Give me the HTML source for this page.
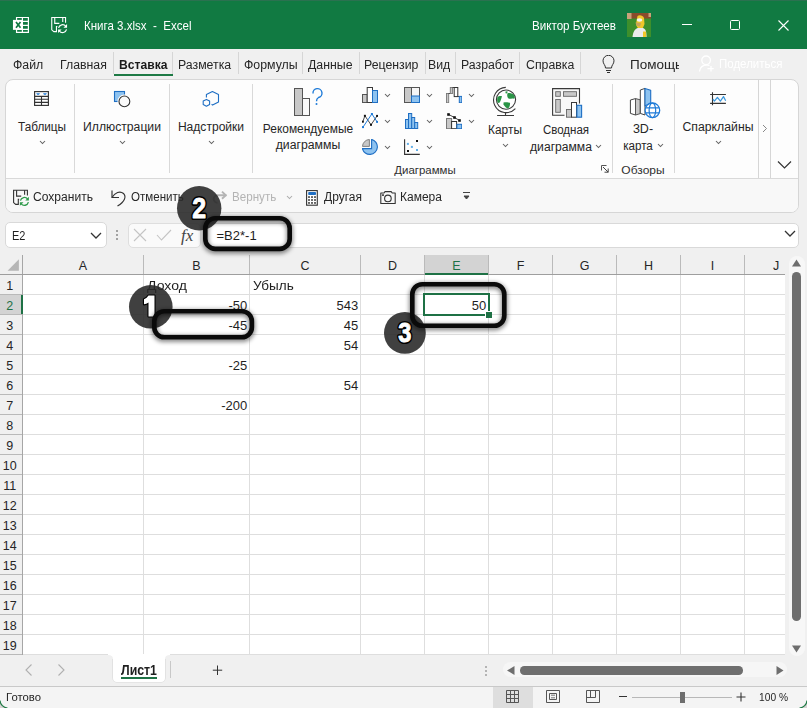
<!DOCTYPE html>
<html><head><meta charset="utf-8"><style>
html,body{margin:0;padding:0;}
body{width:807px;height:708px;overflow:hidden;position:relative;background:#f0f0f0;font-family:"Liberation Sans", sans-serif;}
.t{position:absolute;line-height:1;white-space:pre;}
.r{position:absolute;}
</style></head><body>
<div class="r" style="left:0px;top:0px;width:807px;height:49px;background:#117a42;"></div><div class="r" style="left:0px;top:0px;width:807px;height:1px;background:#2b7150;"></div><svg class="r" style="left:10px;top:14px;" width="22" height="22" viewBox="0 0 22 22">
<path d="M6.55 3 V18.95 M12.4 3 V18.95 M18.4 3 V18.95 M6 3.5 H19 M6 7.37 H19 M6 11.34 H19 M6 15.3 H19 M6 18.4 H19" stroke="#ffffff" stroke-width="1.2"/>
<rect x="2.95" y="5.9" width="9.8" height="9.95" fill="#ffffff"/>
<path d="M6 7.9 L10.5 13.7 M10.5 7.9 L6 13.7" stroke="#117a42" stroke-width="1.7"/>
</svg><svg class="r" style="left:48px;top:14px;" width="22" height="22" viewBox="0 0 22 22"><g transform="translate(-3.85 -2.73)">
<path d="M21.4 11.4 V6.3 H7.6 V18.6 L9.7 20.4 H12.3 V15.3 H13.2" fill="none" stroke="#ffffff" stroke-width="1.1"/>
<path d="M10.6 6.3 V12.1 H15.2 M18.6 6.3 V10.8" fill="none" stroke="#ffffff" stroke-width="1.1"/>
<path d="M14.4 16.6 A4.1 4.1 0 0 1 21.6 15" fill="none" stroke="#ffffff" stroke-width="1.2"/>
<path d="M19.3 16.4 H22.9 V12.8 Z" fill="#ffffff"/>
<path d="M22.4 18.2 A4.1 4.1 0 0 1 15.2 19.8" fill="none" stroke="#ffffff" stroke-width="1.2"/>
<path d="M17.5 18.2 H13.9 V21.8 Z" fill="#ffffff"/>
</g></svg><div class="t" style="top:19.13px;font-size:13.2px;color:#ffffff;left:83.5px;transform:scaleX(0.875);transform-origin:left;">Книга 3.xlsx  -  Excel</div><div class="t" style="top:19.82px;font-size:12.5px;color:#ffffff;left:532px;transform:scaleX(0.93);transform-origin:left;">Виктор Бухтеев</div><svg class="r" style="left:627px;top:13px;" width="24" height="24" viewBox="0 0 24 24">
<rect width="24" height="24" fill="#3d8f2c"/>
<rect x="0" y="0" width="24" height="5.5" fill="#8a4b2b"/>
<rect x="0" y="0" width="4.5" height="6" fill="#c9a27a"/>
<rect x="21.5" y="0" width="2.5" height="4" fill="#c9a27a"/>
<path d="M10.5 3 C12 1.5 16 2 17 5 L17.5 11 C17 13 16 14 15.5 16 L11.5 16 C10.5 14 9 13 9 11 L9.5 8 Z" fill="#f1c72a"/>
<ellipse cx="12.5" cy="7" rx="2.8" ry="1.8" fill="#f4f4f4"/>
<path d="M8.5 9.5 C9 12.5 10.5 13.5 13 13.5 L14 10 Z" fill="#c9a35a"/>
<path d="M5.5 24 C6 19 8 15.5 11 15 L16 15 C19 16 19.5 19 19.5 24 Z" fill="#ebebeb"/>
<rect x="16" y="18.5" width="3" height="5.5" fill="#f1c72a"/>
</svg><div class="r" style="left:682px;top:24px;width:10px;height:1px;background:#ffffff;"></div><div class="r" style="left:730px;top:20.3px;width:10px;height:9.5px;border:1px solid #ffffff;box-sizing:border-box;border-radius:1.5px;"></div><svg class="r" style="left:777.5px;top:19.8px;" width="11" height="11" viewBox="0 0 11 11"><path d="M0.5 0.5 L10.5 10.5 M10.5 0.5 L0.5 10.5" stroke="#ffffff" stroke-width="1.1"/></svg><div class="t" style="top:58.92px;font-size:12.5px;color:#262626;left:12.7px;transform:scaleX(0.985);transform-origin:left;">Файл</div><div class="t" style="top:58.92px;font-size:12.5px;color:#262626;left:60.4px;transform:scaleX(0.985);transform-origin:left;">Главная</div><div class="t" style="top:58.92px;font-size:12.5px;color:#1a1a1a;font-weight:700;left:119.0px;transform:scaleX(0.97);transform-origin:left;">Вставка</div><div class="t" style="top:58.92px;font-size:12.5px;color:#262626;left:178px;transform:scaleX(0.985);transform-origin:left;">Разметка</div><div class="t" style="top:58.92px;font-size:12.5px;color:#262626;left:243.5px;transform:scaleX(0.985);transform-origin:left;">Формулы</div><div class="t" style="top:58.92px;font-size:12.5px;color:#262626;left:308px;transform:scaleX(0.985);transform-origin:left;">Данные</div><div class="t" style="top:58.92px;font-size:12.5px;color:#262626;left:364.3px;transform:scaleX(0.985);transform-origin:left;">Рецензир</div><div class="t" style="top:58.92px;font-size:12.5px;color:#262626;left:428.2px;transform:scaleX(0.985);transform-origin:left;">Вид</div><div class="t" style="top:58.92px;font-size:12.5px;color:#262626;left:460.8px;transform:scaleX(0.985);transform-origin:left;">Разработ</div><div class="t" style="top:58.92px;font-size:12.5px;color:#262626;left:525.5px;transform:scaleX(0.985);transform-origin:left;">Справка</div><div class="r" style="left:113px;top:52px;width:1px;height:22px;background:#d6d6d6;"></div><div class="r" style="left:172px;top:52px;width:1px;height:22px;background:#d6d6d6;"></div><div class="r" style="left:238px;top:52px;width:1px;height:22px;background:#d6d6d6;"></div><div class="r" style="left:302px;top:52px;width:1px;height:22px;background:#d6d6d6;"></div><div class="r" style="left:359px;top:52px;width:1px;height:22px;background:#d6d6d6;"></div><div class="r" style="left:425px;top:52px;width:1px;height:22px;background:#d6d6d6;"></div><div class="r" style="left:455px;top:52px;width:1px;height:22px;background:#d6d6d6;"></div><div class="r" style="left:519px;top:52px;width:1px;height:22px;background:#d6d6d6;"></div><div class="r" style="left:580px;top:52px;width:1px;height:22px;background:#d6d6d6;"></div><div class="r" style="left:114px;top:74px;width:59px;height:2px;background:#1e7a45;"></div><svg class="r" style="left:602px;top:55px;" width="13" height="19" viewBox="0 0 13 19">
<path d="M3.5 13 C3.5 10 1 9 1 5.8 A5.5 5.5 0 0 1 12 5.8 C12 9 9.5 10 9.5 13 Z" fill="none" stroke="#303030" stroke-width="1"/>
<path d="M4 15.5 H9 M5 17.5 H8" stroke="#303030" stroke-width="1"/>
</svg><div class="r" style="left:630px;top:50px;width:48.5px;height:28px;overflow:hidden;"><div class="t" style="top:8.92px;font-size:12.5px;color:#262626;left:0px;transform:scaleX(1.08);transform-origin:left;">Помощь</div></div><svg class="r" style="left:695px;top:52px;" width="22" height="22" viewBox="0 0 22 22">
<circle cx="11.1" cy="8.3" r="4.3" fill="none" stroke="#fff" stroke-width="1.3"/>
<path d="M4.5 19.5 C5 15.5 8 13 12 13 C13 13 14 13.2 14.5 13.5" fill="none" stroke="#fff" stroke-width="1.3"/>
<path d="M16 14 V19.5 M12.5 16.7 H18.7" stroke="#fff" stroke-width="1.3"/>
</svg><div class="t" style="top:58.02px;font-size:12.5px;color:#ffffff;left:718.5px;transform:scaleX(0.92);transform-origin:left;">Поделиться</div><div class="r" style="left:4.9px;top:79px;width:794px;height:134px;background:#fdfdfd;border:1px solid #d6d6d6;border-radius:8px;box-sizing:border-box;"></div><div class="r" style="left:5.9px;top:178px;width:792px;height:1px;background:#d9d9d9;"></div><div class="r" style="left:5.9px;top:179px;width:792px;height:33px;background:#f8f8f8;border-radius:0 0 7px 7px;"></div><div class="r" style="left:74px;top:84px;width:1px;height:89px;background:#d9d9d9;"></div><div class="r" style="left:169px;top:84px;width:1px;height:89px;background:#d9d9d9;"></div><div class="r" style="left:252px;top:84px;width:1px;height:89px;background:#d9d9d9;"></div><div class="r" style="left:612px;top:84px;width:1px;height:89px;background:#d9d9d9;"></div><div class="r" style="left:674px;top:84px;width:1px;height:89px;background:#d9d9d9;"></div><svg class="r" style="left:28px;top:86px;" width="28" height="28" viewBox="0 0 28 28">
<rect x="6.6" y="5.6" width="13.8" height="13.8" fill="#fff" stroke="#333" stroke-width="1.15"/>
<path d="M6.6 10.4 H20.4 M6.6 13.3 H20.4 M6.6 16.4 H20.4 M13.5 10.4 V19.4" stroke="#333" stroke-width="1.1"/>
<path d="M8.2 7.2 H12 L11 8.8 H9.2 Z M15 7.2 H18.9 L17.9 8.8 H16 Z" fill="#1f7bd8"/>
</svg><div class="t" style="top:120.62px;font-size:12.5px;color:#262626;left:42px;transform:translateX(-50%) scaleX(0.94);">Таблицы</div><svg class="r" style="left:38.5px;top:140px;" width="7" height="5" viewBox="0 0 7 5"><path d="M1 1 L3.5 3.5 L6 1" fill="none" stroke="#606060" stroke-width="1.05"/></svg><svg class="r" style="left:108px;top:86px;" width="30" height="30" viewBox="0 0 30 30">
<rect x="6.5" y="5.5" width="10" height="10" fill="#8ec3f0" stroke="#1f6fc4" stroke-width="1.1"/>
<circle cx="16.4" cy="15.4" r="5.4" fill="#fafafa" stroke="#fdfdfd" stroke-width="3"/>
<circle cx="16.4" cy="15.4" r="5.4" fill="#fafafa" stroke="#333" stroke-width="1.1"/>
</svg><div class="t" style="top:120.62px;font-size:12.5px;color:#262626;left:121.8px;transform:translateX(-50%) scaleX(0.975);">Иллюстрации</div><svg class="r" style="left:118.5px;top:140px;" width="7" height="5" viewBox="0 0 7 5"><path d="M1 1 L3.5 3.5 L6 1" fill="none" stroke="#606060" stroke-width="1.05"/></svg><svg class="r" style="left:196px;top:86px;" width="30" height="30" viewBox="0 0 30 30">
<path d="M10.4 11.4 V8.6 L16.4 5.5 L22.5 8.6 V16 L16.6 19.1 L15.6 18.3" fill="none" stroke="#1f6fc4" stroke-width="1.1" stroke-linejoin="round"/>
<path d="M10.4 13.4 L13.6 15.1 V18.6 L10.4 20.3 L7.2 18.6 V15.1 Z" fill="none" stroke="#1f6fc4" stroke-width="1.1" stroke-linejoin="round"/>
</svg><div class="t" style="top:120.62px;font-size:12.5px;color:#262626;left:211px;transform:translateX(-50%) scaleX(0.965);">Надстройки</div><svg class="r" style="left:207.5px;top:140px;" width="7" height="5" viewBox="0 0 7 5"><path d="M1 1 L3.5 3.5 L6 1" fill="none" stroke="#606060" stroke-width="1.05"/></svg><svg class="r" style="left:293px;top:87px;" width="30" height="30" viewBox="0 0 30 30">
<rect x="1.5" y="1.5" width="8" height="27" fill="#c8c8c8" stroke="#555"/>
<rect x="9.5" y="11.5" width="7" height="17" fill="#fafafa" stroke="#555"/>
<path d="M20 6.5 A4.5 4.5 0 1 1 25.5 10.5 C24 11.3 23.5 12 23.5 14.2" fill="none" stroke="#1f7bd8" stroke-width="1.4"/>
<circle cx="23.5" cy="17" r="1" fill="#1f7bd8"/>
</svg><div class="t" style="top:123.12px;font-size:12.5px;color:#262626;left:308.3px;transform:translateX(-50%) scaleX(0.955);">Рекомендуемые</div><div class="t" style="top:139.12px;font-size:12.5px;color:#262626;left:308.3px;transform:translateX(-50%) scaleX(0.98);">диаграммы</div><svg class="r" style="left:362px;top:87px;" width="16" height="16" viewBox="0 0 16 16"><rect x="0.5" y="7.5" width="4.7" height="8" fill="#c8c8c8" stroke="#555"/><rect x="5.2" y="0.5" width="5.3" height="15" fill="#fff" stroke="#3a3a3a"/><rect x="10.5" y="3.5" width="5" height="12" fill="#8ec3f0" stroke="#1f6fc4"/></svg><svg class="r" style="left:383.5px;top:93.3px;" width="7" height="5" viewBox="0 0 7 5"><path d="M1 1 L3.5 3.5 L6 1" fill="none" stroke="#606060" stroke-width="1.05"/></svg><svg class="r" style="left:404px;top:87px;" width="16" height="16" viewBox="0 0 16 16"><rect x="0.5" y="0.5" width="15" height="15" fill="#f6f6f6" stroke="#555"/><rect x="1" y="1" width="6.5" height="14" fill="#c8c8c8"/><path d="M7.5 0.5 V15.5" stroke="#555"/><rect x="7.5" y="9" width="8" height="6.5" fill="#8ec3f0" stroke="#1f6fc4"/></svg><svg class="r" style="left:425.5px;top:93.3px;" width="7" height="5" viewBox="0 0 7 5"><path d="M1 1 L3.5 3.5 L6 1" fill="none" stroke="#606060" stroke-width="1.05"/></svg><svg class="r" style="left:446px;top:87px;" width="16" height="16" viewBox="0 0 16 16"><rect x="0.5" y="6.5" width="2.2" height="9.3" fill="#c8c8c8" stroke="#777" stroke-width="0.9"/><path d="M2.7 6.5 H4.3" stroke="#333" stroke-width="0.9"/><rect x="4.3" y="0.5" width="2.3" height="6" fill="#c8c8c8" stroke="#777" stroke-width="0.9"/><path d="M6.6 0.5 H8.2" stroke="#333" stroke-width="0.9"/><rect x="8.2" y="0.5" width="3.6" height="9.1" fill="#fff" stroke="#333" stroke-width="1"/><path d="M11.8 9.5 H13.3" stroke="#333" stroke-width="0.9"/><rect x="13.3" y="9.4" width="2.5" height="6.3" fill="#8ec3f0" stroke="#1f6fc4" stroke-width="1"/></svg><svg class="r" style="left:468.0px;top:93.3px;" width="7" height="5" viewBox="0 0 7 5"><path d="M1 1 L3.5 3.5 L6 1" fill="none" stroke="#606060" stroke-width="1.05"/></svg><svg class="r" style="left:362px;top:113px;" width="16" height="16" viewBox="0 0 16 16"><path d="M0.8 8.7 L2.9 2.8 L9 11.8 L15.1 2.9" fill="none" stroke="#333" stroke-width="0.9"/><path d="M1 14.1 L9.9 0.9 L15.1 8.9" fill="none" stroke="#1f7bd8" stroke-width="1"/><g fill="#111"><rect x="-0.2" y="7.7" width="2" height="2"/><rect x="1.9" y="1.8" width="2" height="2"/><rect x="8" y="10.8" width="2" height="2"/><rect x="14.1" y="1.9" width="2" height="2"/></g><g fill="#1f7bd8"><rect x="0" y="13.1" width="2" height="2"/><rect x="8.9" y="0" width="2" height="2"/><rect x="14.1" y="7.9" width="2" height="2"/></g></svg><svg class="r" style="left:383.5px;top:119.3px;" width="7" height="5" viewBox="0 0 7 5"><path d="M1 1 L3.5 3.5 L6 1" fill="none" stroke="#606060" stroke-width="1.05"/></svg><svg class="r" style="left:404px;top:113px;" width="16" height="16" viewBox="0 0 16 16"><rect x="1.5" y="6.5" width="3" height="9" fill="#8ec3f0" stroke="#1f6fc4"/><rect x="4.5" y="0.5" width="3.2" height="15" fill="#8ec3f0" stroke="#1f6fc4"/><rect x="7.7" y="4.5" width="3" height="11" fill="#8ec3f0" stroke="#1f6fc4"/><rect x="10.7" y="9.5" width="3" height="6" fill="#8ec3f0" stroke="#1f6fc4"/></svg><svg class="r" style="left:425.5px;top:119.3px;" width="7" height="5" viewBox="0 0 7 5"><path d="M1 1 L3.5 3.5 L6 1" fill="none" stroke="#606060" stroke-width="1.05"/></svg><svg class="r" style="left:446px;top:113px;" width="16" height="16" viewBox="0 0 16 16"><path d="M2.5 1.4 L8.5 4.5 L13.5 7.5" stroke="#333" stroke-width="0.9" fill="none"/><rect x="0.5" y="5.5" width="5.1" height="10.2" fill="#c8c8c8" stroke="#777"/><rect x="5.6" y="8.5" width="5" height="7.2" fill="#fff" stroke="#333"/><rect x="10.9" y="11.3" width="4.8" height="4.4" fill="#8ec3f0" stroke="#1f6fc4"/><g fill="#111"><rect x="1.2" y="0.2" width="2.6" height="2.6"/><rect x="7.2" y="3.2" width="2.6" height="2.6"/><rect x="12.2" y="6.2" width="2.6" height="2.6"/></g></svg><svg class="r" style="left:468.0px;top:119.3px;" width="7" height="5" viewBox="0 0 7 5"><path d="M1 1 L3.5 3.5 L6 1" fill="none" stroke="#606060" stroke-width="1.05"/></svg><svg class="r" style="left:362px;top:139px;" width="16" height="16" viewBox="0 0 16 16"><path d="M9.6 0.4 A7.6 7.6 0 1 1 0.4 9.6 H9.6 Z" fill="#8ec3f0" stroke="#1f6fc4" stroke-width="1.1"/><path d="M7.4 7.4 H0.5 A7.2 7.2 0 0 1 7.4 0.5 Z" fill="#c8c8c8" stroke="#777" stroke-width="0.9"/></svg><svg class="r" style="left:383.5px;top:145.3px;" width="7" height="5" viewBox="0 0 7 5"><path d="M1 1 L3.5 3.5 L6 1" fill="none" stroke="#606060" stroke-width="1.05"/></svg><svg class="r" style="left:404px;top:139px;" width="16" height="16" viewBox="0 0 16 16"><path d="M0.6 0.2 V15.4 H15.8" fill="none" stroke="#333" stroke-width="1.1"/><rect x="12" y="1" width="2" height="2" fill="#111"/><rect x="3" y="11" width="2" height="2" fill="#111"/><rect x="2.9" y="3.9" width="2" height="2" fill="#62aee8"/><rect x="6.9" y="6.9" width="2" height="2" fill="#62aee8"/><rect x="12" y="10" width="2" height="2" fill="#62aee8"/></svg><svg class="r" style="left:425.5px;top:145.3px;" width="7" height="5" viewBox="0 0 7 5"><path d="M1 1 L3.5 3.5 L6 1" fill="none" stroke="#606060" stroke-width="1.05"/></svg><div class="t" style="top:164.69px;font-size:11px;color:#303030;left:424.5px;transform:translateX(-50%) scaleX(1.04);">Диаграммы</div><svg class="r" style="left:488px;top:84px;" width="34" height="34" viewBox="0 0 34 34">
<path d="M17.8 3.4 A12.6 12.6 0 1 0 27.4 24.6" fill="none" stroke="#3a3a3a" stroke-width="1.1"/>
<circle cx="18" cy="15.6" r="9.6" fill="#fff" stroke="#3a3a3a" stroke-width="1.1"/>
<path d="M19.5 9.5 C21 8.5 25 9 26.5 12 C27.2 14 26.5 15 25 14.5 C23.5 14 22 15.5 20.5 14.5 C19 13 19 11 19.5 9.5 Z" fill="#2a9446"/>
<path d="M9.5 13 C10.5 12 12.5 11.5 14 12.3 C13.5 14 13 16 12 18 C11 19.5 10.5 19 9.5 18.5 C9 17 9 15 9.5 13 Z" fill="#2a9446"/>
<path d="M15.5 18.5 C17.5 18 20.5 18 22 19 C22.3 21 21.5 23.5 20 24.5 C18 24 16.5 22 15.5 20.5 Z" fill="#2a9446"/>
<path d="M17.5 7.5 L19.5 7.3 L19.3 9.5 L17.5 9.3 Z" fill="#2a9446"/>
<path d="M17.5 28.3 V31.5 M9.1 31.5 H26" stroke="#3a3a3a" stroke-width="1.1"/>
</svg><div class="t" style="top:123.62px;font-size:12.5px;color:#262626;left:505px;transform:translateX(-50%) scaleX(0.95);">Карты</div><svg class="r" style="left:501.5px;top:142.8px;" width="7" height="5" viewBox="0 0 7 5"><path d="M1 1 L3.5 3.5 L6 1" fill="none" stroke="#606060" stroke-width="1.05"/></svg><svg class="r" style="left:548px;top:84px;" width="40" height="40" viewBox="0 0 40 40">
<path d="M16.5 31.3 H4.6 V4.6 H31.5 V19.6" fill="#f8f8f8" stroke="#3a3a3a" stroke-width="1.1"/>
<rect x="7.7" y="7.7" width="4.6" height="4.6" fill="#c8c8c8" stroke="#666" stroke-width="0.9"/>
<rect x="15.5" y="7.7" width="13" height="4.6" fill="#c8c8c8" stroke="#666" stroke-width="0.9"/>
<rect x="7.7" y="15.5" width="4.6" height="12.8" fill="#c8c8c8" stroke="#666" stroke-width="0.9"/>
<rect x="18.5" y="25.5" width="5" height="7.7" fill="#c8c8c8" stroke="#666" stroke-width="0.9"/>
<rect x="23.5" y="18.5" width="5" height="14.7" fill="#fff" stroke="#3a3a3a" stroke-width="1"/>
<rect x="28.9" y="21.3" width="4.7" height="11.9" fill="#8ec3f0" stroke="#1f6fc4" stroke-width="1.1"/>
</svg><div class="t" style="top:124.42px;font-size:12.5px;color:#262626;left:565.5px;transform:translateX(-50%) scaleX(0.92);">Сводная</div><div class="t" style="top:140.72px;font-size:12.5px;color:#262626;left:560.5px;transform:translateX(-50%) scaleX(0.97);">диаграмма</div><svg class="r" style="left:594.5px;top:144px;" width="7" height="5" viewBox="0 0 7 5"><path d="M1 1 L3.5 3.5 L6 1" fill="none" stroke="#606060" stroke-width="1.05"/></svg><svg class="r" style="left:600px;top:164px;" width="10" height="10" viewBox="0 0 10 10"><path d="M1.5 6.5 V1.5 H6.5" fill="none" stroke="#555" stroke-width="1"/><path d="M3 3 L8.2 8.2 M8.2 4.5 V8.2 H4.5" fill="none" stroke="#444" stroke-width="1"/></svg><svg class="r" style="left:625px;top:84px;" width="40" height="40" viewBox="0 0 40 40">
<path d="M5.4 16 L10.5 14.6 V31 L5.4 29.4 Z" fill="#fff" stroke="#444" stroke-width="1" stroke-linejoin="round"/>
<path d="M10.5 14.6 L15.3 15.8 V29.6 L10.5 31 Z" fill="#c8c8c8" stroke="#555" stroke-width="1" stroke-linejoin="round"/>
<path d="M15.3 6 L20 4.4 V31 L15.3 29.4 Z" fill="#fff" stroke="#444" stroke-width="1" stroke-linejoin="round"/>
<path d="M20 4.4 L25.7 6.3 V19 L20 22 Z" fill="#8ec3f0" stroke="#1f6fc4" stroke-width="1.1" stroke-linejoin="round"/>
<circle cx="27.4" cy="26.3" r="7.3" fill="#fff" stroke="#1f7bd8" stroke-width="1.3"/>
<path d="M20.5 23.8 H34.3 M20.5 28.8 H34.3" stroke="#1f7bd8" stroke-width="1.2"/>
<ellipse cx="27.4" cy="26.3" rx="3.3" ry="7.3" fill="none" stroke="#1f7bd8" stroke-width="1.2"/>
</svg><div class="t" style="top:123.22px;font-size:12.5px;color:#262626;left:643px;transform:translateX(-50%) scaleX(1.0);">3D-</div><div class="t" style="top:139.52px;font-size:12.5px;color:#262626;left:638px;transform:translateX(-50%) scaleX(0.93);">карта</div><svg class="r" style="left:656.5px;top:143px;" width="7" height="5" viewBox="0 0 7 5"><path d="M1 1 L3.5 3.5 L6 1" fill="none" stroke="#606060" stroke-width="1.05"/></svg><div class="t" style="top:164.79px;font-size:11px;color:#303030;left:643.3px;transform:translateX(-50%) scaleX(1.09);">Обзоры</div><svg class="r" style="left:704px;top:86px;" width="30" height="26" viewBox="0 0 30 26">
<path d="M8.5 6.3 V19.3 M6.1 8.5 H21.9 M6.1 17.4 H21.9" stroke="#333" stroke-width="1.1"/>
<path d="M8.9 13.2 L10.4 15.1 L13.4 11.3 L16.4 15.2 L19.5 10.6 L21.7 14.7" fill="none" stroke="#3a97dc" stroke-width="1.2" stroke-linejoin="round"/>
</svg><div class="t" style="top:120.72px;font-size:12.5px;color:#262626;left:718px;transform:translateX(-50%) scaleX(0.98);">Спарклайны</div><svg class="r" style="left:714.5px;top:140px;" width="7" height="5" viewBox="0 0 7 5"><path d="M1 1 L3.5 3.5 L6 1" fill="none" stroke="#606060" stroke-width="1.05"/></svg><div class="r" style="left:758px;top:80px;width:1px;height:98px;background:#d6d6d6;"></div><div class="r" style="left:770px;top:80px;width:1px;height:98px;background:#d6d6d6;"></div><svg class="r" style="left:762px;top:124px;" width="6" height="9" viewBox="0 0 6 9"><path d="M1 1 L4.5 4.5 L1 8" fill="none" stroke="#888" stroke-width="1"/></svg><svg class="r" style="left:777px;top:160px;" width="15" height="10" viewBox="0 0 15 10"><path d="M1 1.5 L7.5 8 L14 1.5" fill="none" stroke="#333" stroke-width="1.2"/></svg><svg class="r" style="left:6px;top:184px;" width="30" height="26" viewBox="0 0 30 26">
<path d="M21.4 11.4 V6.3 H7.6 V18.6 L9.7 20.4 H12.3 V15.3 H13.2" fill="none" stroke="#333" stroke-width="1.1" stroke-linejoin="miter"/>
<path d="M10.6 6.3 V12.1 H15.2 M18.6 6.3 V10.8" fill="none" stroke="#333" stroke-width="1.1"/>
<path d="M14.4 16.6 A4.1 4.1 0 0 1 21.6 15" fill="none" stroke="#2e9a4a" stroke-width="1.3"/>
<path d="M19.3 16.4 H22.9 V12.8 Z" fill="#2e9a4a"/>
<path d="M22.4 18.2 A4.1 4.1 0 0 1 15.2 19.8" fill="none" stroke="#2e9a4a" stroke-width="1.3"/>
<path d="M17.5 18.2 H13.9 V21.8 Z" fill="#2e9a4a"/>
</svg><div class="t" style="top:191.32px;font-size:12.5px;color:#262626;left:33px;transform:scaleX(0.965);transform-origin:left;">Сохранить</div><svg class="r" style="left:109px;top:189px;" width="18" height="18" viewBox="0 0 18 18">
<path d="M3 1.5 V8.5 H10" fill="none" stroke="#333" stroke-width="1.15"/>
<path d="M3 8.5 C6 3.5 11 1.5 14.5 4.5 C17.5 7.5 16 12.5 8.5 17" fill="none" stroke="#333" stroke-width="1.15"/>
</svg><div class="t" style="top:191.32px;font-size:12.5px;color:#262626;left:130.6px;transform:scaleX(0.925);transform-origin:left;">Отменить</div><svg class="r" style="left:205px;top:184px;" width="26" height="24" viewBox="0 0 26 24"><path d="M21.3 11.2 H12.5 A3.8 3.8 0 0 0 12.5 18.8" fill="none" stroke="#b4b4b4" stroke-width="1.9"/><path d="M17 7.6 L20.8 11.2 L17 14.8" fill="none" stroke="#b4b4b4" stroke-width="1.9"/></svg><div class="t" style="top:191.32px;font-size:12.5px;color:#b4b4b4;left:232px;transform:scaleX(0.93);transform-origin:left;">Вернуть</div><svg class="r" style="left:286.0px;top:195px;" width="7" height="5" viewBox="0 0 7 5"><path d="M1 1 L3.5 3.5 L6 1" fill="none" stroke="#aaa" stroke-width="1.05"/></svg><svg class="r" style="left:300px;top:184px;" width="30" height="26" viewBox="0 0 30 26">
<rect x="6.6" y="6.6" width="10.7" height="14.6" fill="#fff" stroke="#333" stroke-width="1.1"/>
<rect x="8.2" y="8.1" width="7.8" height="2.9" rx="0.8" fill="#1f6fc4"/>
<g fill="#111"><rect x="8.2" y="12.3" width="1.6" height="1.5"/><rect x="11.2" y="12.3" width="1.6" height="1.5"/><rect x="14.2" y="12.3" width="1.6" height="1.5"/>
<rect x="8.2" y="15.25" width="1.6" height="1.5"/><rect x="11.2" y="15.25" width="1.6" height="1.5"/><rect x="14.2" y="15.25" width="1.6" height="1.5"/>
<rect x="8.2" y="18.2" width="1.6" height="1.5"/><rect x="11.2" y="18.2" width="1.6" height="1.5"/><rect x="14.2" y="18.2" width="1.6" height="1.5"/></g>
</svg><div class="t" style="top:191.32px;font-size:12.5px;color:#262626;left:324px;transform:scaleX(0.96);transform-origin:left;">Другая</div><svg class="r" style="left:374px;top:184px;" width="30" height="26" viewBox="0 0 30 26">
<path d="M6.8 9 H10 L11 7.6 H17.2 L18.2 9 H21.2 V19.5 H6.8 Z" fill="none" stroke="#333" stroke-width="1.1" stroke-linejoin="round"/>
<circle cx="13.9" cy="14.4" r="3.3" fill="none" stroke="#333" stroke-width="1.1"/>
<rect x="8.2" y="10.3" width="1.6" height="1.6" fill="#111"/>
</svg><div class="t" style="top:191.32px;font-size:12.5px;color:#262626;left:400px;transform:scaleX(0.96);transform-origin:left;">Камера</div><svg class="r" style="left:462px;top:191px;" width="9" height="10" viewBox="0 0 9 10"><path d="M1 1.5 H8 M2 5 H7 L4.5 8 Z" fill="#444" stroke="#444" stroke-width="1"/></svg><div class="r" style="left:5px;top:222px;width:101.5px;height:25.5px;background:#fff;border:1px solid #d9d9d9;border-radius:5px;box-sizing:border-box;"></div><div class="t" style="top:229.62px;font-size:12.5px;color:#1f1f1f;left:11.5px;transform:scaleX(0.88);transform-origin:left;">E2</div><svg class="r" style="left:90px;top:232px;" width="12" height="8" viewBox="0 0 12 8"><path d="M1 1 L6 6 L11 1" fill="none" stroke="#333" stroke-width="1.3"/></svg><div class="r" style="left:116px;top:230px;width:2px;height:2px;background:#888;border-radius:1px;"></div><div class="r" style="left:116px;top:234px;width:2px;height:2px;background:#888;border-radius:1px;"></div><div class="r" style="left:116px;top:238px;width:2px;height:2px;background:#888;border-radius:1px;"></div><div class="r" style="left:127.5px;top:222.5px;width:73px;height:25px;background:#fafafa;border:1px solid #dedede;border-radius:5px;box-sizing:border-box;"></div><svg class="r" style="left:133px;top:228px;" width="14" height="14" viewBox="0 0 14 14"><path d="M1 1 L13 13 M13 1 L1 13" stroke="#c4c4c4" stroke-width="1.1"/></svg><svg class="r" style="left:156px;top:229px;" width="16" height="12" viewBox="0 0 16 12"><path d="M1 6 L5.5 11 L15 1" fill="none" stroke="#c4c4c4" stroke-width="1.1"/></svg><div class="t" style="top:227.11px;font-size:17px;color:#444;left:181px;font-family:'Liberation Serif',serif;font-style:italic;">fx</div><div class="r" style="left:203.5px;top:222.5px;width:595px;height:25.5px;background:#fff;border:1px solid #d9d9d9;border-radius:5px;box-sizing:border-box;"></div><div class="t" style="top:229.00px;font-size:13px;color:#1f1f1f;left:216.5px;transform:scaleX(1.0);transform-origin:left;">=B2*-1</div><svg class="r" style="left:784px;top:230px;" width="12" height="8" viewBox="0 0 12 8"><path d="M1 1 L6 6 L11 1" fill="none" stroke="#333" stroke-width="1.3"/></svg><div class="r" style="left:23px;top:275px;width:762px;height:380px;background:#ffffff;"></div><div class="r" style="left:143px;top:255px;width:1px;height:19px;background:#bababa;"></div><div class="r" style="left:249px;top:255px;width:1px;height:19px;background:#bababa;"></div><div class="r" style="left:360px;top:255px;width:1px;height:19px;background:#bababa;"></div><div class="r" style="left:424px;top:255px;width:1px;height:19px;background:#bababa;"></div><div class="r" style="left:488px;top:255px;width:1px;height:19px;background:#bababa;"></div><div class="r" style="left:552px;top:255px;width:1px;height:19px;background:#bababa;"></div><div class="r" style="left:616px;top:255px;width:1px;height:19px;background:#bababa;"></div><div class="r" style="left:680px;top:255px;width:1px;height:19px;background:#bababa;"></div><div class="r" style="left:744px;top:255px;width:1px;height:19px;background:#bababa;"></div><div class="r" style="left:22px;top:255px;width:1px;height:400px;background:#a6a6a6;"></div><div class="r" style="left:425px;top:255px;width:63px;height:19px;background:#d3d3d3;"></div><div class="r" style="left:0px;top:274px;width:785px;height:1px;background:#9e9e9e;"></div><div class="r" style="left:425px;top:273px;width:63px;height:2px;background:#1e7145;"></div><svg class="r" style="left:7px;top:259px;" width="13" height="13" viewBox="0 0 13 13"><path d="M11.9 0.2 V11.8 H0.6 Z" fill="#b6b6b6"/></svg><div class="t" style="top:259.82px;font-size:12.5px;color:#262626;left:83.0px;transform:translateX(-50%);">A</div><div class="t" style="top:259.82px;font-size:12.5px;color:#262626;left:196.5px;transform:translateX(-50%);">B</div><div class="t" style="top:259.82px;font-size:12.5px;color:#262626;left:305.0px;transform:translateX(-50%);">C</div><div class="t" style="top:259.82px;font-size:12.5px;color:#262626;left:392.5px;transform:translateX(-50%);">D</div><div class="t" style="top:259.82px;font-size:12.5px;color:#1e7145;left:456.5px;transform:translateX(-50%);">E</div><div class="t" style="top:259.82px;font-size:12.5px;color:#262626;left:520.5px;transform:translateX(-50%);">F</div><div class="t" style="top:259.82px;font-size:12.5px;color:#262626;left:584.5px;transform:translateX(-50%);">G</div><div class="t" style="top:259.82px;font-size:12.5px;color:#262626;left:648.5px;transform:translateX(-50%);">H</div><div class="t" style="top:259.82px;font-size:12.5px;color:#262626;left:712.5px;transform:translateX(-50%);">I</div><div class="t" style="top:259.82px;font-size:12.5px;color:#262626;left:776px;transform:translateX(-50%);">J</div><div class="r" style="left:23px;top:294px;width:762px;height:1px;background:#dedede;"></div><div class="r" style="left:0px;top:294px;width:22px;height:1px;background:#b9b9b9;"></div><div class="r" style="left:23px;top:314px;width:762px;height:1px;background:#dedede;"></div><div class="r" style="left:0px;top:314px;width:22px;height:1px;background:#b9b9b9;"></div><div class="r" style="left:23px;top:334px;width:762px;height:1px;background:#dedede;"></div><div class="r" style="left:0px;top:334px;width:22px;height:1px;background:#b9b9b9;"></div><div class="r" style="left:23px;top:354px;width:762px;height:1px;background:#dedede;"></div><div class="r" style="left:0px;top:354px;width:22px;height:1px;background:#b9b9b9;"></div><div class="r" style="left:23px;top:374px;width:762px;height:1px;background:#dedede;"></div><div class="r" style="left:0px;top:374px;width:22px;height:1px;background:#b9b9b9;"></div><div class="r" style="left:23px;top:394px;width:762px;height:1px;background:#dedede;"></div><div class="r" style="left:0px;top:394px;width:22px;height:1px;background:#b9b9b9;"></div><div class="r" style="left:23px;top:414px;width:762px;height:1px;background:#dedede;"></div><div class="r" style="left:0px;top:414px;width:22px;height:1px;background:#b9b9b9;"></div><div class="r" style="left:23px;top:434px;width:762px;height:1px;background:#dedede;"></div><div class="r" style="left:0px;top:434px;width:22px;height:1px;background:#b9b9b9;"></div><div class="r" style="left:23px;top:454px;width:762px;height:1px;background:#dedede;"></div><div class="r" style="left:0px;top:454px;width:22px;height:1px;background:#b9b9b9;"></div><div class="r" style="left:23px;top:474px;width:762px;height:1px;background:#dedede;"></div><div class="r" style="left:0px;top:474px;width:22px;height:1px;background:#b9b9b9;"></div><div class="r" style="left:23px;top:494px;width:762px;height:1px;background:#dedede;"></div><div class="r" style="left:0px;top:494px;width:22px;height:1px;background:#b9b9b9;"></div><div class="r" style="left:23px;top:514px;width:762px;height:1px;background:#dedede;"></div><div class="r" style="left:0px;top:514px;width:22px;height:1px;background:#b9b9b9;"></div><div class="r" style="left:23px;top:534px;width:762px;height:1px;background:#dedede;"></div><div class="r" style="left:0px;top:534px;width:22px;height:1px;background:#b9b9b9;"></div><div class="r" style="left:23px;top:554px;width:762px;height:1px;background:#dedede;"></div><div class="r" style="left:0px;top:554px;width:22px;height:1px;background:#b9b9b9;"></div><div class="r" style="left:23px;top:574px;width:762px;height:1px;background:#dedede;"></div><div class="r" style="left:0px;top:574px;width:22px;height:1px;background:#b9b9b9;"></div><div class="r" style="left:23px;top:594px;width:762px;height:1px;background:#dedede;"></div><div class="r" style="left:0px;top:594px;width:22px;height:1px;background:#b9b9b9;"></div><div class="r" style="left:23px;top:614px;width:762px;height:1px;background:#dedede;"></div><div class="r" style="left:0px;top:614px;width:22px;height:1px;background:#b9b9b9;"></div><div class="r" style="left:23px;top:634px;width:762px;height:1px;background:#dedede;"></div><div class="r" style="left:0px;top:634px;width:22px;height:1px;background:#b9b9b9;"></div><div class="r" style="left:23px;top:654px;width:762px;height:1px;background:#dedede;"></div><div class="r" style="left:0px;top:654px;width:22px;height:1px;background:#b9b9b9;"></div><div class="r" style="left:143px;top:275px;width:1px;height:380px;background:#dedede;"></div><div class="r" style="left:249px;top:275px;width:1px;height:380px;background:#dedede;"></div><div class="r" style="left:360px;top:275px;width:1px;height:380px;background:#dedede;"></div><div class="r" style="left:424px;top:275px;width:1px;height:380px;background:#dedede;"></div><div class="r" style="left:488px;top:275px;width:1px;height:380px;background:#dedede;"></div><div class="r" style="left:552px;top:275px;width:1px;height:380px;background:#dedede;"></div><div class="r" style="left:616px;top:275px;width:1px;height:380px;background:#dedede;"></div><div class="r" style="left:680px;top:275px;width:1px;height:380px;background:#dedede;"></div><div class="r" style="left:744px;top:275px;width:1px;height:380px;background:#dedede;"></div><div class="r" style="left:0px;top:295px;width:22px;height:19px;background:#d3d3d3;"></div><div class="r" style="left:21px;top:295px;width:2px;height:19px;background:#1e7145;"></div><div class="t" style="top:280.02px;font-size:12.5px;color:#262626;left:9.8px;transform:translateX(-50%);">1</div><div class="t" style="top:300.02px;font-size:12.5px;color:#1e7145;left:9.8px;transform:translateX(-50%);">2</div><div class="t" style="top:320.02px;font-size:12.5px;color:#262626;left:9.8px;transform:translateX(-50%);">3</div><div class="t" style="top:340.02px;font-size:12.5px;color:#262626;left:9.8px;transform:translateX(-50%);">4</div><div class="t" style="top:360.02px;font-size:12.5px;color:#262626;left:9.8px;transform:translateX(-50%);">5</div><div class="t" style="top:380.02px;font-size:12.5px;color:#262626;left:9.8px;transform:translateX(-50%);">6</div><div class="t" style="top:400.02px;font-size:12.5px;color:#262626;left:9.8px;transform:translateX(-50%);">7</div><div class="t" style="top:420.02px;font-size:12.5px;color:#262626;left:9.8px;transform:translateX(-50%);">8</div><div class="t" style="top:440.02px;font-size:12.5px;color:#262626;left:9.8px;transform:translateX(-50%);">9</div><div class="t" style="top:460.02px;font-size:12.5px;color:#262626;left:9.8px;transform:translateX(-50%);">10</div><div class="t" style="top:480.02px;font-size:12.5px;color:#262626;left:9.8px;transform:translateX(-50%);">11</div><div class="t" style="top:500.02px;font-size:12.5px;color:#262626;left:9.8px;transform:translateX(-50%);">12</div><div class="t" style="top:520.02px;font-size:12.5px;color:#262626;left:9.8px;transform:translateX(-50%);">13</div><div class="t" style="top:540.02px;font-size:12.5px;color:#262626;left:9.8px;transform:translateX(-50%);">14</div><div class="t" style="top:560.02px;font-size:12.5px;color:#262626;left:9.8px;transform:translateX(-50%);">15</div><div class="t" style="top:580.02px;font-size:12.5px;color:#262626;left:9.8px;transform:translateX(-50%);">16</div><div class="t" style="top:600.02px;font-size:12.5px;color:#262626;left:9.8px;transform:translateX(-50%);">17</div><div class="t" style="top:620.02px;font-size:12.5px;color:#262626;left:9.8px;transform:translateX(-50%);">18</div><div class="t" style="top:640.02px;font-size:12.5px;color:#262626;left:9.8px;transform:translateX(-50%);">19</div><div class="t" style="top:279.00px;font-size:13px;color:#1f1f1f;left:146.5px;transform:scaleX(1.08);transform-origin:left;">Доход</div><div class="t" style="top:279.00px;font-size:13px;color:#1f1f1f;left:252.5px;transform:scaleX(1.04);transform-origin:left;">Убыль</div><div class="t" style="top:299.00px;font-size:13px;color:#1f1f1f;right:559.8px;transform:scaleX(1.0);transform-origin:right;">-50</div><div class="t" style="top:319.00px;font-size:13px;color:#1f1f1f;right:559.8px;transform:scaleX(1.0);transform-origin:right;">-45</div><div class="t" style="top:359.00px;font-size:13px;color:#1f1f1f;right:559.8px;transform:scaleX(1.0);transform-origin:right;">-25</div><div class="t" style="top:399.00px;font-size:13px;color:#1f1f1f;right:559.8px;transform:scaleX(1.0);transform-origin:right;">-200</div><div class="t" style="top:299.00px;font-size:13px;color:#1f1f1f;right:448.8px;transform:scaleX(1.0);transform-origin:right;">543</div><div class="t" style="top:319.00px;font-size:13px;color:#1f1f1f;right:448.8px;transform:scaleX(1.0);transform-origin:right;">45</div><div class="t" style="top:339.00px;font-size:13px;color:#1f1f1f;right:448.8px;transform:scaleX(1.0);transform-origin:right;">54</div><div class="t" style="top:379.00px;font-size:13px;color:#1f1f1f;right:448.8px;transform:scaleX(1.0);transform-origin:right;">54</div><div class="t" style="top:299.00px;font-size:13px;color:#1f1f1f;right:320.8px;transform:scaleX(1.0);transform-origin:right;">50</div><div class="r" style="left:423px;top:293px;width:67px;height:23px;border:2px solid #1e7145;box-sizing:border-box;"></div><div class="r" style="left:485px;top:311px;width:7px;height:7px;background:#fff;"></div><div class="r" style="left:486px;top:312px;width:5.5px;height:5.5px;background:#1e7145;"></div><div class="r" style="left:788.5px;top:255.5px;width:16.5px;height:400.5px;background:#f7f7f7;border-radius:8px;"></div><svg class="r" style="left:792px;top:259.3px;" width="10" height="8" viewBox="0 0 10 8"><path d="M0 7.5 L4.5 0.5 L9 7.5 Z" fill="#6e6e6e"/></svg><div class="r" style="left:792px;top:271.7px;width:9px;height:349px;background:#6e6e6e;border-radius:4.5px;"></div><svg class="r" style="left:792px;top:645px;" width="10" height="8" viewBox="0 0 10 8"><path d="M0 0.5 L4.5 7.5 L9 0.5 Z" fill="#6e6e6e"/></svg><svg class="r" style="left:24px;top:663px;" width="10" height="14" viewBox="0 0 10 14"><path d="M7.5 1.5 L2 7 L7.5 12.5" fill="none" stroke="#b0b0b0" stroke-width="1.1"/></svg><svg class="r" style="left:56px;top:663px;" width="10" height="14" viewBox="0 0 10 14"><path d="M2.5 1.5 L8 7 L2.5 12.5" fill="none" stroke="#b0b0b0" stroke-width="1.1"/></svg><svg class="r" style="left:100px;top:650px;" width="80" height="40" viewBox="0 0 80 40">
<path d="M13 9 V28 A4 4 0 0 0 17 32 H61 A4 4 0 0 0 65 28 V9" fill="none" stroke="#d9d9d9" stroke-width="1.2"/>
<path d="M8 4 H70 V5 Q65 5 65 9 V28 A4 4 0 0 1 61 32 H17 A4 4 0 0 1 13 28 V9 Q13 5 8 5 Z" fill="#ffffff"/>
</svg><div class="t" style="top:663.15px;font-size:14px;color:#1f1f1f;font-weight:700;left:120.8px;transform:scaleX(0.88);transform-origin:left;">Лист1</div><div class="r" style="left:121px;top:676.7px;width:36px;height:2.2px;background:#1e7145;"></div><div class="r" style="left:170px;top:661px;width:1px;height:17px;background:#c8c8c8;"></div><svg class="r" style="left:212px;top:664.5px;" width="11" height="11" viewBox="0 0 11 11"><path d="M5.5 0.5 V10 M0.8 5.2 H10.2" stroke="#333" stroke-width="1"/></svg><div class="r" style="left:485px;top:665.5px;width:2px;height:2px;background:#a0a0a0;border-radius:1px;"></div><div class="r" style="left:485px;top:669.5px;width:2px;height:2px;background:#a0a0a0;border-radius:1px;"></div><div class="r" style="left:485px;top:673.5px;width:2px;height:2px;background:#a0a0a0;border-radius:1px;"></div><div class="r" style="left:503px;top:662.3px;width:284px;height:15.2px;background:#f6f6f6;border-radius:8px;"></div><svg class="r" style="left:506px;top:666px;" width="9" height="9" viewBox="0 0 9 9"><path d="M8.5 0 V9 L1 4.5 Z" fill="#6e6e6e"/></svg><div class="r" style="left:519.5px;top:666px;width:223.5px;height:8.6px;background:#6e6e6e;border-radius:4.3px;"></div><svg class="r" style="left:776px;top:666px;" width="8" height="9" viewBox="0 0 8 9"><path d="M0.5 0 V9 L7.5 4.5 Z" fill="#6e6e6e"/></svg><div class="r" style="left:0px;top:687px;width:807px;height:21px;background:#f4f4f4;"></div><div class="r" style="left:0px;top:686px;width:807px;height:1px;background:#c9c9c9;"></div><svg class="r" style="left:0px;top:688px;" width="20" height="20" viewBox="0 0 20 20"><path d="M0 12.5 A8 8 0 0 0 7.5 20 H0 Z" fill="#d8d4d4"/><path d="M0 12.5 A8 8 0 0 0 7.5 20" fill="none" stroke="#1e7a45" stroke-width="1.2"/></svg><svg class="r" style="left:787px;top:688px;" width="20" height="20" viewBox="0 0 20 20"><path d="M20 12.5 A8 8 0 0 1 12.5 20 H20 Z" fill="#d8d4d4"/><path d="M20 12.5 A8 8 0 0 1 12.5 20" fill="none" stroke="#1e7a45" stroke-width="1.2"/></svg><div class="t" style="top:691.69px;font-size:11px;color:#262626;left:5.5px;transform:scaleX(1.03);transform-origin:left;">Готово</div><div class="r" style="left:493px;top:687px;width:40px;height:21px;background:#dedede;"></div><svg class="r" style="left:506px;top:690px;" width="14" height="14" viewBox="0 0 14 14"><path d="M0.5 0.5 H12.5 V12.5 H0.5 Z M0.5 4.5 H12.5 M0.5 8.5 H12.5 M4.5 0.5 V12.5 M8.5 0.5 V12.5" fill="none" stroke="#555" stroke-width="1"/></svg><svg class="r" style="left:545px;top:690px;" width="16" height="14" viewBox="0 0 16 14"><path d="M1.5 0.5 H14.5 V12.5 H1.5 Z M4.5 3.5 H11.5 V9.5 H4.5 Z" fill="none" stroke="#555"/><path d="M6 5.2 H10 M6 7.8 H10" stroke="#777" stroke-width="1"/></svg><svg class="r" style="left:586px;top:690px;" width="15" height="14" viewBox="0 0 15 14"><path d="M0.5 0.5 H13.5 V12.5 H0.5 Z M0.5 7.5 H9.5 V0.5 M4.5 0.5 V7.5" fill="none" stroke="#555"/></svg><div class="r" style="left:619px;top:696px;width:8px;height:1.2px;background:#333;"></div><div class="r" style="left:632px;top:697px;width:100px;height:1px;background:#b8b8b8;"></div><div class="r" style="left:680px;top:692px;width:5px;height:11px;background:#6e6e6e;"></div><svg class="r" style="left:736px;top:692px;" width="10" height="10" viewBox="0 0 10 10"><path d="M5 0.5 V9.5 M0.5 5 H9.5" stroke="#333" stroke-width="1.1"/></svg><div class="t" style="top:691.69px;font-size:11px;color:#262626;left:759px;transform:scaleX(0.93);transform-origin:left;">100 %</div><svg class="r" style="left:123.1px;top:279.0px;" width="55.6" height="55.6" viewBox="0 0 55.6 55.6">
<circle cx="27.8" cy="27.8" r="21.8" fill="rgba(40,40,40,0.89)"/>
<g transform="translate(27.8 38.24) scale(0.86 1)" text-anchor="middle" font-family="Liberation Sans" font-weight="700" font-size="29">
<text x="0" y="0" fill="#000" stroke="#000" stroke-width="4.2" stroke-linejoin="round"></text>
<text x="0" y="0" fill="#fff" stroke="#fff" stroke-width="0.9" stroke-linejoin="round"></text></g>
</svg><svg class="r" style="left:140px;top:292px;" width="18" height="28" viewBox="0 0 18 28"><path d="M8.5 3.5 H14.5 V24.5 H8.5 V10.5 C7 11.5 5.5 12 4 12.3 V7.3 C6 6.5 7.5 5 8.5 3.5 Z" fill="#fff" stroke="#000" stroke-width="2.2" paint-order="stroke" stroke-linejoin="round"/></svg><svg class="r" style="left:171.3px;top:180.3px;" width="56.4" height="56.4" viewBox="0 0 56.4 56.4">
<circle cx="28.2" cy="28.2" r="22.2" fill="rgba(40,40,40,0.89)"/>
<g transform="translate(28.2 37.64) scale(0.86 1)" text-anchor="middle" font-family="Liberation Sans" font-weight="700" font-size="29">
<text x="0" y="0" fill="#000" stroke="#000" stroke-width="4.2" stroke-linejoin="round">2</text>
<text x="0" y="0" fill="#fff" stroke="#fff" stroke-width="0.9" stroke-linejoin="round">2</text></g>
</svg><svg class="r" style="left:378.20000000000005px;top:306.1px;" width="53.8" height="53.8" viewBox="0 0 53.8 53.8">
<circle cx="26.9" cy="26.9" r="20.9" fill="rgba(40,40,40,0.89)"/>
<g transform="translate(26.9 36.199999999999996) scale(0.86 1)" text-anchor="middle" font-family="Liberation Sans" font-weight="700" font-size="27.5">
<text x="0" y="0" fill="#000" stroke="#000" stroke-width="4.2" stroke-linejoin="round">3</text>
<text x="0" y="0" fill="#fff" stroke="#fff" stroke-width="0.9" stroke-linejoin="round">3</text></g>
</svg><svg class="r" style="left:142px;top:299px;" width="122.19999999999999" height="50.60000000000002" viewBox="0 0 122.19999999999999 50.60000000000002">
<defs><filter id="sh152" x="-20%" y="-40%" width="140%" height="180%"><feGaussianBlur stdDeviation="2.2"/></filter></defs>
<rect x="12.3" y="13.8" width="97.6" height="26.00000000000002" rx="10" fill="none" stroke="rgba(0,0,0,0.45)" stroke-width="6.6" filter="url(#sh152)"/>
<rect x="12.3" y="12.3" width="97.6" height="26.00000000000002" rx="10" fill="none" stroke="#0a0a0a" stroke-width="4.6"/>
</svg><svg class="r" style="left:192.5px;top:206px;" width="109.0" height="55.19999999999999" viewBox="0 0 109.0 55.19999999999999">
<defs><filter id="sh202" x="-20%" y="-40%" width="140%" height="180%"><feGaussianBlur stdDeviation="2.2"/></filter></defs>
<rect x="12.3" y="13.8" width="84.4" height="30.599999999999987" rx="10" fill="none" stroke="rgba(0,0,0,0.45)" stroke-width="6.6" filter="url(#sh202)"/>
<rect x="12.3" y="12.3" width="84.4" height="30.599999999999987" rx="10" fill="none" stroke="#0a0a0a" stroke-width="4.6"/>
</svg><svg class="r" style="left:400px;top:272px;" width="116.60000000000002" height="66" viewBox="0 0 116.60000000000002 66">
<defs><filter id="sh410" x="-20%" y="-40%" width="140%" height="180%"><feGaussianBlur stdDeviation="2.2"/></filter></defs>
<rect x="12.3" y="13.8" width="92.00000000000003" height="41.4" rx="10" fill="none" stroke="rgba(0,0,0,0.45)" stroke-width="6.6" filter="url(#sh410)"/>
<rect x="12.3" y="12.3" width="92.00000000000003" height="41.4" rx="10" fill="none" stroke="#0a0a0a" stroke-width="4.6"/>
</svg>
</body></html>
